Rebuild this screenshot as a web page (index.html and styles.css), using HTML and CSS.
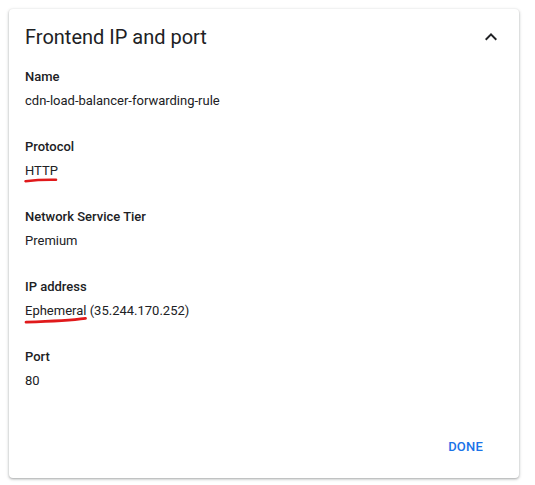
FILE: index.html
```html
<!DOCTYPE html>
<html>
<head>
<meta charset="utf-8">
<link rel="stylesheet" href="styles.css">
</head>
<body>
<div class="card">
  <div class="header">
    <h2 class="title">Frontend IP and port</h2>
    <svg class="chevron" width="24" height="24" viewBox="0 0 24 24"><path d="M7.41 15.41L12 10.83l4.59 4.58L18 14l-6-6-6 6z" fill="#202124"/></svg>
  </div>
  <div class="fields">
    <div class="field">
      <div class="label">Name</div>
      <div class="value">cdn-load-balancer-forwarding-rule</div>
    </div>
    <div class="field">
      <div class="label">Protocol</div>
      <div class="value"><span class="marked">HTTP<svg class="scribble scribble-short" width="34" height="8" viewBox="0 0 34 8"><path d="M1.5 5.2 C 10 4.2, 22 3.6, 32 3.8" stroke="#e0191b" stroke-width="2.6" fill="none" stroke-linecap="round"/></svg></span></div>
    </div>
    <div class="field">
      <div class="label">Network Service Tier</div>
      <div class="value">Premium</div>
    </div>
    <div class="field">
      <div class="label">IP address</div>
      <div class="value"><span class="marked">Ephemeral<svg class="scribble scribble-long" width="64" height="10" viewBox="0 0 64 10"><path d="M2 7.2 C 20 6.6, 45 5.6, 61.5 3.4" stroke="#e0191b" stroke-width="2.8" fill="none" stroke-linecap="round"/></svg></span> (35.244.170.252)</div>
    </div>
    <div class="field">
      <div class="label">Port</div>
      <div class="value">80</div>
    </div>
  </div>
  <div class="actions">
    <button class="done">DONE</button>
  </div>
</div>
</body>
</html>
```

FILE: styles.css
```css
html, body {
  margin: 0;
  padding: 0;
  background: #ffffff;
}
body {
  font-family: Roboto, "Liberation Sans", Arial, sans-serif;
  color: #202124;
  padding: 9px;
}
.card {
  width: 510px;
  height: 469px;
  box-sizing: border-box;
  background: #fff;
  border-radius: 4px;
  box-shadow: 0 1px 2px rgba(60,64,67,0.3), 0 1px 3px 1px rgba(60,64,67,0.15);
  padding: 0 16px;
  display: flex;
  flex-direction: column;
}
.header {
  display: flex;
  align-items: center;
  justify-content: space-between;
  height: 56px;
}
.title {
  margin: 0;
  font-size: 20px;
  font-weight: 400;
  line-height: 28px;
  color: #202124;
}
.chevron {
  margin-right: 0;
}
.fields {
  display: flex;
  flex-direction: column;
  gap: 30px;
  padding-top: 4px;
}
.field {
  display: flex;
  flex-direction: column;
  gap: 8px;
}
.label {
  font-size: 13px;
  font-weight: 500;
  line-height: 16px;
  color: #202124;
}
.value {
  font-size: 13px;
  font-weight: 400;
  line-height: 16px;
  color: #202124;
}
.marked {
  position: relative;
}
.scribble {
  position: absolute;
  pointer-events: none;
}
.scribble-short {
  top: 13px;
  left: -1px;
}
.scribble-long {
  top: 12px;
  left: -1px;
}
.actions {
  margin-top: auto;
  display: flex;
  justify-content: flex-end;
  padding-bottom: 15px;
  padding-right: 12px;
}
.done {
  border: none;
  background: none;
  font-family: Roboto, "Liberation Sans", Arial, sans-serif;
  font-size: 13px;
  font-weight: 500;
  letter-spacing: 0.2px;
  color: #1a73e8;
  padding: 8px 8px;
  line-height: 16px;
}
```
